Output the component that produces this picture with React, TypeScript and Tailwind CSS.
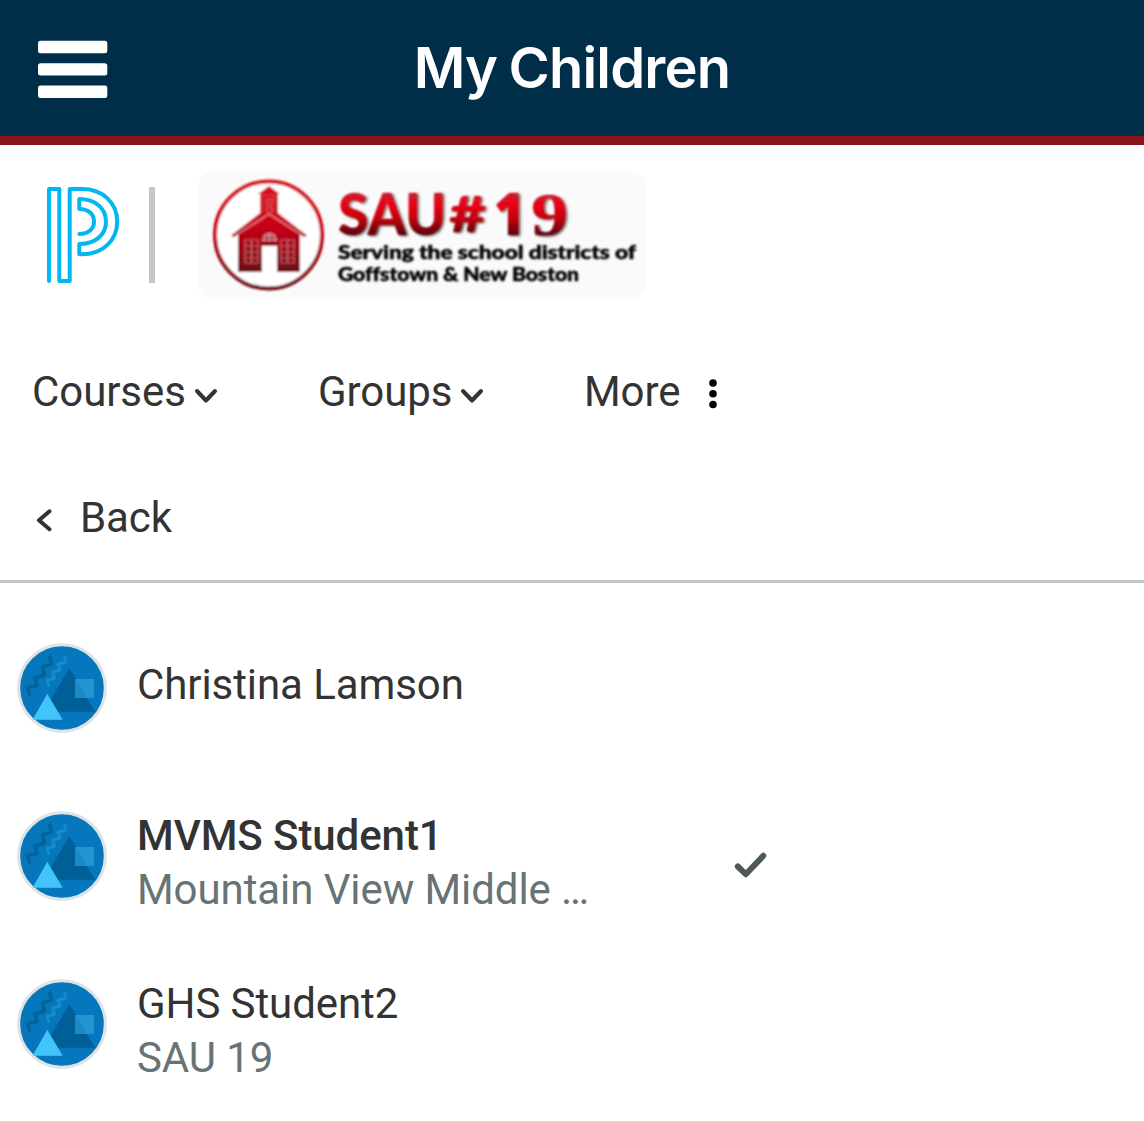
const NAV_ITEMS = [
  { label: 'Courses', width: 'w-[286px]' },
  { label: 'Groups', width: 'w-[266px]' },
]

const CHILDREN = [
  { name: 'Christina Lamson', school: '', selected: false },
  { name: 'MVMS Student1', school: 'Mountain View Middle …', selected: true },
  { name: 'GHS Student2', school: 'SAU 19', selected: false },
]

function MenuIcon() {
  return (
    <svg width="70" height="58" viewBox="0 0 70 58" fill="#fff">
      <rect x="0" y="0.8" width="69.3" height="12.4" rx="2.5" />
      <rect x="0" y="23.2" width="69.3" height="12.4" rx="2.5" />
      <rect x="0" y="45.6" width="69.3" height="12.4" rx="2.5" />
    </svg>
  )
}

function PowerSchoolLogo() {
  return (
    <svg
      width="74"
      height="98"
      viewBox="46 186 74 98"
      fill="none"
      stroke="#00b7f1"
      strokeWidth="4"
      strokeLinecap="round"
      strokeLinejoin="round"
    >
      <path d="M49 281V189H59.3V281H69.7V189H82C103 189 117.2 203 117.2 221.7C117.2 240 103 254.3 82 254.3H79.3V244C95 244 106 235 106 221.7C106 208 95 199 79.3 199V209C88.5 209 94 214 94 221.5C94 229 88.5 234 79.3 234" />
    </svg>
  )
}

function DistrictLogo() {
  return (
    <svg width="450" height="130" viewBox="197 170 450 130">
      <defs>
        <linearGradient id="red" x1="0" y1="0" x2="0" y2="1">
          <stop offset="0" stopColor="#d4101f" />
          <stop offset="0.45" stopColor="#cc0012" />
          <stop offset="1" stopColor="#6c0c14" />
        </linearGradient>
        <linearGradient id="title" x1="0" y1="193" x2="0" y2="237" gradientUnits="userSpaceOnUse">
          <stop offset="0" stopColor="#c9202e" />
          <stop offset="0.25" stopColor="#ec0014" />
          <stop offset="0.6" stopColor="#c0000c" />
          <stop offset="1" stopColor="#4a0408" />
        </linearGradient>
        <filter id="soft">
          <feGaussianBlur stdDeviation="0.9" />
        </filter>
        <filter id="shadow">
          <feGaussianBlur stdDeviation="0.8" />
          <feDropShadow dx="1.8" dy="1" stdDeviation="0.8" floodColor="#222" floodOpacity="0.7" />
        </filter>
      </defs>
      <rect x="198" y="171.5" width="448" height="128" rx="16" fill="#fafafa" />
      <g filter="url(#soft)">
        <circle cx="268.5" cy="235" r="53.5" fill="#fff" stroke="url(#red)" strokeWidth="4" />
        <path d="M269 186L280 194H278V213L307 235.5L304 237L300 234.5V272H277V246H262V272H238V234.5L234 237L231 235.5L260 213V194H258Z" fill="url(#red)" />
        <path d="M236 235L269 214L302 235" fill="none" stroke="#dc8d93" strokeWidth="1.2" />
        <path d="M262 195H277M263 195V213M275 195V213" fill="none" stroke="#d95e69" strokeWidth="0.8" />
        <path d="M267 199H272V204H267ZM267 207H272V212H267Z" fill="none" stroke="#e0707b" strokeWidth="1" />
        <path d="M262 241C262 230 277 230 277 241Z" fill="#d98890" />
        <path d="M267 234V241M272 234V241M262 238H277" fill="none" stroke="#8f2530" strokeWidth="1" />
        <g fill="none" stroke="#cb6a73" strokeWidth="1.1">
          <path d="M245 240H258V263H245ZM251.5 240V263M245 246H258M245 252H258M245 258H258" />
          <path d="M281 240H294V263H281ZM287.5 240V263M281 246H294M281 252H294M281 258H294" />
        </g>
      </g>
      <g filter="url(#shadow)" fill="url(#title)" fontFamily="Lato, sans-serif" fontWeight="900">
        <text x="338" y="234.5" fontSize="58" textLength="108" lengthAdjust="spacingAndGlyphs">SAU</text>
        <text x="449" y="232" fontSize="50" textLength="37" lengthAdjust="spacingAndGlyphs">#</text>
        <text x="494" y="235" fontSize="59" textLength="31" lengthAdjust="spacingAndGlyphs" fontFamily="'Noto Sans', sans-serif">1</text>
        <text x="531" y="235" fontSize="62" textLength="37" lengthAdjust="spacingAndGlyphs" fontFamily="'Liberation Serif', serif" fontWeight="700">9</text>
      </g>
      <g filter="url(#soft)" fontFamily="Lato, sans-serif" fontWeight="900" fontSize="18.5" fill="#000" stroke="#000" strokeWidth="0.5">
        <text x="338" y="259" textLength="298" lengthAdjust="spacingAndGlyphs">Serving the school districts of</text>
        <text x="338" y="281" textLength="241" lengthAdjust="spacingAndGlyphs">Goffstown &amp; New Boston</text>
      </g>
    </svg>
  )
}

function ChevronDown() {
  return (
    <svg width="24" height="18" viewBox="0 0 24 18" fill="none" stroke="#333" strokeWidth="4" strokeLinecap="round" strokeLinejoin="round">
      <path d="M3 4L12 13.5L21 4" />
    </svg>
  )
}

function Avatar() {
  return (
    <svg width="90" height="90" viewBox="0 0 90 90">
      <circle cx="45" cy="45" r="43.3" fill="#0677bd" stroke="#dfe3e3" strokeWidth="3" />
      <path d="M52.3 25L78 68.7H26.5Z" fill="#005f96" />
      <path d="M58 36H77V55H58Z" fill="#2196d3" />
      <path d="M58.8 36L70 55H58V36Z" fill="#1b8bc8" />
      <path d="M30.3 50.7L45.7 76.7H15.5Z" fill="#42c4fb" />
      <path d="M32.3 12.7L34.7 21.3L25.7 23.7L27.3 32L18 34.7L19.7 42.7L10.3 44.7L13 53" fill="none" stroke="#00639c" strokeWidth="3.6" />
      <path d="M47.3 13L49 18.7L41.3 21.3L43 27L35.7 29.3L37.3 35.3L30.3 37.3L32.3 44" fill="none" stroke="#168bca" strokeWidth="3" />
    </svg>
  )
}

export default function App() {
  return (
    <div className="h-[1121px] w-[1144px] overflow-hidden bg-white font-['Roboto',sans-serif] text-[42px] leading-[54px] tracking-[-0.08px] text-[#333]">
      {/* App bar */}
      <header className="grid h-[145px] grid-cols-[1fr_auto_1fr] items-center border-b-[9px] border-[#8b141c] bg-[#002d48]">
        <button className="justify-self-start pt-0.5 pl-[38px]" aria-label="Menu">
          <MenuIcon />
        </button>
        <h1 className="pb-px font-['Inter',sans-serif] text-[56px] leading-[68px] font-semibold tracking-[-0.8px] text-white [word-spacing:-2px]">
          My Children
        </h1>
      </header>

      {/* Logos */}
      <div className="flex h-[180px] items-center pl-[46px]">
        <PowerSchoolLogo />
        <div className="ml-[29px] h-24 w-[6px] bg-[#c3c9c8]" />
        <div className="ml-[42px]">
          <DistrictLogo />
        </div>
      </div>

      <nav className="flex h-[134px] items-center pl-8">
        {NAV_ITEMS.map((item) => (
          <div key={item.label} className={`flex items-center ${item.width}`}>
            <span>{item.label}</span>
            <span className="ml-2 pt-2">
              <ChevronDown />
            </span>
          </div>
        ))}
        <span>More</span>
        <svg className="mt-1 ml-[29px]" width="8" height="30" viewBox="0 0 8 30" fill="#000">
          <circle cx="4" cy="4" r="3.8" />
          <circle cx="4" cy="14.8" r="3.8" />
          <circle cx="4" cy="25.5" r="3.8" />
        </svg>
      </nav>

      <div className="flex h-[124px] items-center border-b-[3px] border-[#c3c9c8] pb-1 pl-[35px]">
        <svg className="mt-1" width="17" height="24" viewBox="0 0 17 24" fill="none" stroke="#333" strokeWidth="4" strokeLinecap="round" strokeLinejoin="round">
          <path d="M14.5 3.3L4 12.3L14.5 21.3" />
        </svg>
        <span className="ml-7">Back</span>
      </div>

      {/* Children list */}
      <ul className="pt-[21px]">
        {CHILDREN.map((child) => (
          <li key={child.name} className="flex h-[168px] items-center pl-[17px]">
            <Avatar />
            <div className={`ml-[30px] w-[597px] ${child.school ? 'pt-[14px]' : 'pb-1.5'}`}>
              <div className={child.selected ? 'font-medium' : ''}>{child.name}</div>
              {child.school && <div className="text-[#677374]">{child.school}</div>}
            </div>
            {child.selected && (
              <svg className="mt-[19px]" width="34" height="28" viewBox="0 0 34 28" fill="none" stroke="#4d5858" strokeWidth="6" strokeLinecap="round" strokeLinejoin="round">
                <path d="M3.8 14.5L11.8 22.2L29.3 3.8" />
              </svg>
            )}
          </li>
        ))}
      </ul>
    </div>
  )
}
